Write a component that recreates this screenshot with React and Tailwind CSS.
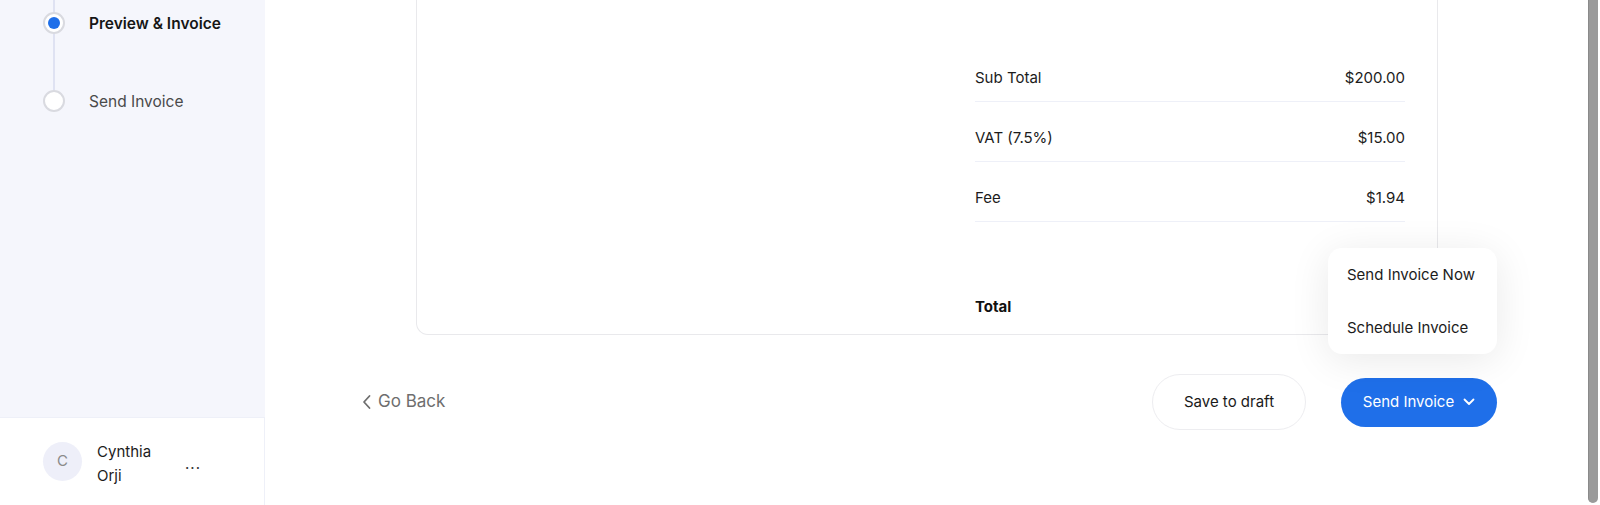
import React from 'react';

const font = { fontFamily: 'Inter, "Noto Sans", sans-serif' };

const rows = [
  { label: 'Sub Total', value: '$200.00' },
  { label: 'VAT (7.5%)', value: '$15.00' },
  { label: 'Fee', value: '$1.94' },
];

const Sidebar = () => (
  <aside className="w-[265px] shrink-0 h-[505px] flex flex-col bg-[#f5f6fc]">
    <div className="flex-1 relative">
      {/* stepper line */}
      <div className="absolute left-[53px] top-0 w-[2px] h-[90px] bg-[#dfe2f2]" />
      <div className="relative flex items-center h-[22px] mt-[12px] pl-[43px]">
        <div className="w-[22px] h-[22px] rounded-full bg-white border-2 border-[#d9dae0] flex items-center justify-center">
          <div className="w-[12px] h-[12px] rounded-full bg-[#1f6fe9]" />
        </div>
        <span className="ml-[24px] mt-[2px] text-[15.5px] font-semibold text-[#161616]">Preview &amp; Invoice</span>
      </div>
      <div className="relative flex items-center h-[22px] mt-[56px] pl-[43px]">
        <div className="w-[22px] h-[22px] rounded-full bg-white border-2 border-[#d9dae0]" />
        <span className="ml-[24px] mt-[2px] text-[15.5px] text-[#4a4a4a]">Send Invoice</span>
      </div>
    </div>
    <div className="h-[88px] bg-white border-t border-r border-[#eef0f8] flex items-center pl-[43px]">
      <div className="w-[39px] h-[39px] rounded-full bg-[#eeeff9] flex items-center justify-center text-[15px] text-[#8a8a8a]">C</div>
      <div className="ml-[15px] mt-[5px] w-[76px] text-[15px] leading-[24px] text-[#1c1c1c]">
        <div>Cynthia</div>
        <div>Orji</div>
      </div>
      <div className="ml-[12px] mt-[6px] text-[15px] text-[#333] tracking-[1px]">...</div>
    </div>
  </aside>
);

const App = () => {
  return (
    <div className="w-[1600px] h-[505px] overflow-hidden flex bg-white" style={font}>
      <Sidebar />
      <main className="flex-1 pl-[97px] pr-[88px]">
        <div className="ml-[54px] mr-[59px] -mt-[20px] rounded-b-[12px] border border-t-0 border-[#e9e9ec] pt-[62px] pb-[18px] pr-[32px] flex flex-col items-end">
          <div className="w-[430px]">
            {rows.map((r) => (
              <div key={r.label} className="h-[60px] flex items-end justify-between pb-[14px] border-b border-[#eef0f8] text-[15px] leading-[18px] text-[#1c1c1c]">
                <span>{r.label}</span>
                <span>{r.value}</span>
              </div>
            ))}
            <div className="mt-[76px] flex justify-between text-[15px] leading-[18px] font-bold text-[#111]">
              <span>Total</span>
              <span>$216.94</span>
            </div>
          </div>
        </div>

        <div className="relative mt-[39px] h-[56px] flex items-center">
          <button className="flex items-center gap-[6px] text-[17px] text-[#6e6e6e]">
            <svg width="10" height="16" viewBox="0 0 10 16" fill="none" stroke="#6e6e6e" strokeWidth="1.8" strokeLinecap="round" strokeLinejoin="round">
              <path d="M7.5 2L2 8l5.5 6" />
            </svg>
            <span>Go Back</span>
          </button>
          <div className="ml-auto flex items-center">
            <button className="w-[154px] h-[56px] rounded-full border border-[#ededf0] bg-white text-[15px] text-[#1a1a1a]">Save to draft</button>
            <button className="ml-[35px] w-[156px] h-[49px] rounded-full bg-[#1f6fe9] text-white text-[15px] flex items-center justify-center gap-[9px]">
              <span>Send Invoice</span>
              <svg width="12" height="8" viewBox="0 0 12 8" fill="none" stroke="white" strokeWidth="1.8" strokeLinecap="round" strokeLinejoin="round">
                <path d="M1.5 1.5L6 6l4.5-4.5" />
              </svg>
            </button>
          </div>
          <div className="absolute right-0 bottom-[76px] w-[169px] h-[106px] rounded-[14px] bg-white shadow-[0_6px_40px_rgba(0,0,0,0.09)] flex flex-col justify-center pl-[19px] gap-[35px] text-[15px] leading-[18px] text-[#1c1c1c]">
            <div>Send Invoice Now</div>
            <div>Schedule Invoice</div>
          </div>
        </div>
      </main>
      <div className="w-[15px] shrink-0 h-[505px] bg-white pl-[3px] pb-[2px]">
        <div className="w-[10px] h-full rounded-b-full bg-[#9a9a9a] border-l border-[#8a8a8a]" />
      </div>
    </div>
  );
};

export default App;
